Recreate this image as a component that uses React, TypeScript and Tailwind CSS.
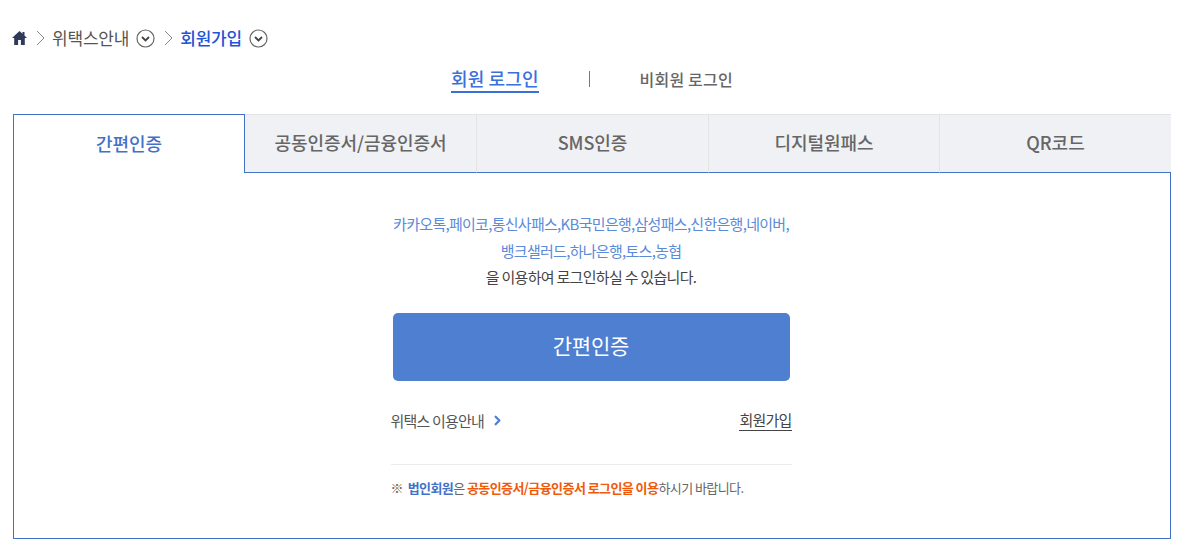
import { ChevronRight } from 'lucide-react';

const tabs = ['공동인증서/금융인증서', 'SMS인증', '디지털원패스', 'QR코드'];

function CircleDown() {
  return (
    <svg width="19" height="19" viewBox="0 0 19 19" fill="none" className="shrink-0">
      <circle cx="9.5" cy="9.5" r="8.5" stroke="#666" strokeWidth="1.2" />
      <path d="M6 8l3.5 3.5L13 8" stroke="#444" strokeWidth="1.8" />
    </svg>
  );
}

function Sep() {
  return (
    <svg width="10" height="16" viewBox="0 0 10 16" fill="none" className="shrink-0">
      <path d="M1 1l7 7-7 7" stroke="#888" strokeWidth="1" />
    </svg>
  );
}

export default function App() {
  return (
    <div className="w-[1189px] h-[552px] bg-white pl-[13px] pr-[18px] pt-[27px] overflow-hidden font-['Noto_Sans_CJK_KR','Noto_Sans',sans-serif] text-[#444]">
      {/* 경로 */}
      <div className="flex items-center h-[22px] -ml-px text-[17px] tracking-[-0.2px]">
        <svg width="15" height="14" viewBox="0 0 15 14" className="shrink-0">
          <path d="M7.5 0L10.5 2.8V1h2v3.6L15 7h-2.2v7H8.9V9H6.1v5H2.2V7H0z" fill="#2f3a56" />
        </svg>
        <span className="ml-[9px]"><Sep /></span>
        <span className="ml-[6px] text-[#555]">위택스안내</span>
        <span className="ml-[7px]"><CircleDown /></span>
        <span className="ml-[9px]"><Sep /></span>
        <span className="ml-[6px] font-medium text-[#1f54d6]">회원가입</span>
        <span className="ml-[7px]"><CircleDown /></span>
      </div>

      {/* 로그인 구분 */}
      <div className="flex items-center justify-center h-[44px] mt-[8px]">
        <span className="text-[18px] font-medium text-[#3a70d8] border-b-2 border-[#3a70d8] leading-[25px] tracking-[0.1px]">회원 로그인</span>
        <span className="w-px h-[16px] bg-[#777] ml-[50px]"></span>
        <span className="ml-[50px] text-[16px] font-medium text-[#666] tracking-[0.2px]">비회원 로그인</span>
      </div>

      {/* 탭 */}
      <div className="grid grid-cols-[232px_232px_232px_231px_231px] mt-[13px] h-[59px] text-[18px] font-medium tracking-[-0.05px]">
        <div className="flex items-center justify-center bg-white border border-b-0 border-[#4272c8] text-[#4272c8] pb-[2px]">간편인증</div>
        {tabs.map((t) => (
          <div key={t} className="flex items-center justify-center bg-[#f0f1f5] border-t border-r border-t-[#e4e4e6] border-r-[#e4e4e6] border-b border-b-[#4272c8] text-[#666] pb-[2px] last:border-r-0">
            {t}
          </div>
        ))}
      </div>

      {/* 본문 */}
      <div className="h-[366px] border border-t-0 border-[#4272c8] flex flex-col items-center pt-[38px] pr-[2px]">
        <div className="w-[401px] text-center text-[15px] leading-[26.5px] tracking-[-0.71px]">
          <p className="text-[#5b8ad8]">카카오톡,페이코,통신사패스,KB국민은행,삼성패스,신한은행,네이버,</p>
          <p className="text-[#5b8ad8]">뱅크샐러드,하나은행,토스,농협</p>
          <p className="text-[#444]">을 이용하여 로그인하실 수 있습니다.</p>
        </div>
        <button className="w-[397px] h-[68px] mt-[22px] pb-[2px] rounded-[5px] bg-[#4f7fd0] text-white text-[21px] tracking-[-0.2px]">간편인증</button>
        <div className="w-[401px] flex items-center justify-between mt-[29px] text-[15px] tracking-[-0.8px] text-[#555]">
          <span className="flex items-center">
            위택스 이용안내
            <ChevronRight size={15} strokeWidth={3.6} className="ml-[6px] text-[#4f7fd0]" />
          </span>
          <span className="border-b border-[#444] leading-[20px] text-[#444]">회원가입</span>
        </div>
        <div className="w-[401px] mt-[32px] pt-[13px] border-t border-[#ececec] text-[13px] tracking-[-0.57px] text-[#666]">
          ※&nbsp; <b className="font-bold text-[#4272c8]">법인회원</b>은 <b className="font-bold text-[#f05a0a]">공동인증서/금융인증서 로그인을 이용</b>하시기 바랍니다.
        </div>
      </div>
    </div>
  );
}
